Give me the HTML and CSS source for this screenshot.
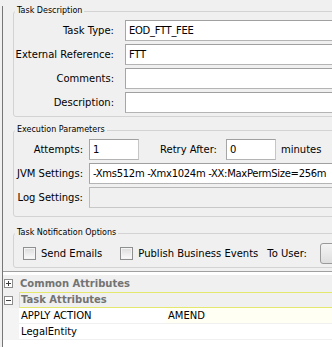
FILE: index.html
```html
<!DOCTYPE html>
<html lang="en">
<head>
    <meta charset="UTF-8">
    <meta name="viewport" content="width=device-width, initial-scale=1.0">
    <title>Task Editor</title>
    <link rel="stylesheet" href="styles.css">
</head>
<body>
    <div class="frame">

        <!-- Task Description -->
        <fieldset class="group desc">
            <legend>Task Description</legend>
            <div class="form">
                <label>Task Type:</label><div class="text">EOD_FTT_FEE</div>
                <label>External Reference:</label><div class="text">FTT</div>
                <label>Comments:</label><div class="text"></div>
                <label>Description:</label><div class="text"></div>
            </div>
        </fieldset>

        <!-- Execution Parameters -->
        <fieldset class="group exec">
            <legend>Execution Parameters</legend>
            <div class="form">
                <label>Attempts:</label>
                <div class="inline">
                    <div class="text short">1</div>
                    <span class="retry">Retry After:</span>
                    <div class="text short gap">0</div>
                    <span class="unit">minutes</span>
                </div>
                <label>JVM Settings:</label><div class="text">-Xms512m -Xmx1024m -XX:MaxPermSize=256m</div>
                <label>Log Settings:</label><div class="text disabled"></div>
            </div>
        </fieldset>

        <!-- Task Notification Options -->
        <fieldset class="group notify">
            <legend>Task Notification Options</legend>
            <div class="checks">
                <label class="check"><input type="checkbox">Send Emails</label>
                <label class="check publish"><input type="checkbox">Publish Business Events</label>
                <span class="to-user">To User:</span>
                <button class="pick"></button>
            </div>
        </fieldset>

        <!-- Property sheet -->
        <div class="props">
            <div class="cat">
                <svg class="toggle" width="9" height="9" viewBox="0 0 9 9">
                    <rect x="0.5" y="0.5" width="8" height="8" fill="#fff" stroke="#8c8c8c"/>
                    <path d="M2 4.5h5M4.5 2v5" stroke="#404040"/>
                </svg>
                <div class="cat-name">Common Attributes</div>
            </div>
            <div class="cat active">
                <svg class="toggle" width="9" height="9" viewBox="0 0 9 9">
                    <rect x="0.5" y="0.5" width="8" height="8" fill="#fff" stroke="#8c8c8c"/>
                    <path d="M2 4.5h5" stroke="#404040"/>
                </svg>
                <div class="cat-name">Task Attributes</div>
            </div>
            <div class="row">
                <div class="gutter"></div>
                <div class="cell">APPLY ACTION</div>
                <div class="cell value selected">AMEND</div>
            </div>
            <div class="row">
                <div class="gutter"></div>
                <div class="cell">LegalEntity</div>
                <div class="cell value"></div>
            </div>
        </div>
    </div>
</body>
</html>
```

FILE: styles.css
```css
html, body {
    margin: 0;
    overflow: hidden;
}
body {
    background: #f0f0f0;
    font-family: "DejaVu Sans", sans-serif;
    font-size: 10px;
    color: #000;
    width: 332px;
    height: 347px;
}
.frame {
    margin-left: 2px;
    border-left: 1px solid #767676;
    height: 347px;
    width: 460px;
}
.group {
    margin: 6px 0 0 10px;
    padding: 0 0 3px 0;
    border: 1px solid #d3d3d3;
    border-radius: 3px;
    width: 430px;
    min-width: 0;
}
.group legend {
    font-size: 8px;
    line-height: 10px;
    margin-left: 1px;
    padding: 0 2px;
}
.form {
    display: grid;
    grid-template-columns: 100px 1fr;
    column-gap: 11px;
    row-gap: 3px;
    align-items: center;
    padding-top: 4px;
}
.form label {
    text-align: right;
    white-space: nowrap;
}
.text {
    height: 21px;
    box-sizing: border-box;
    padding: 0 3px;
    border: 1px solid;
    border-color: #a0a0a0 #c6c6c6 #b4b4b4 #a6a6a6;
    background: #fff;
    line-height: 19px;
    letter-spacing: -0.3px;
    white-space: nowrap;
    overflow: hidden;
}
.text.disabled {
    background: #f0f0f0;
    border-color: #b8b8b8 #d4d4d4 #c8c8c8 #bcbcbc;
}

/* execution parameters */
.exec {
    margin-top: 8px;
    padding-bottom: 8px;
}
.exec .form {
    grid-template-columns: 69px 1fr;
    column-gap: 6px;
}
.inline {
    display: flex;
    align-items: center;
}
.short {
    width: 50px;
}
.retry {
    margin-left: 21px;
}
.short.gap {
    margin-left: 9px;
}
.unit {
    margin-left: 5px;
}

/* notification options */
.notify {
    margin-top: 11px;
}
.checks {
    display: flex;
    align-items: center;
    padding: 5px 0 0 9px;
    height: 21px;
}
.check {
    display: flex;
    align-items: center;
}
.check input {
    appearance: none;
    width: 13px;
    height: 13px;
    margin: 0 5px 0 0;
    border: 1px solid #8e8f8f;
    background: linear-gradient(#dcdcdc, #fbfbfb);
    box-shadow: inset 0 0 0 1px #f4f4f4;
}
.publish {
    margin-left: 18px;
}
.to-user {
    margin-left: 9px;
}
.pick {
    margin-left: 13px;
    width: 60px;
    height: 21px;
    border: 1px solid #9a9a9a;
    border-radius: 3px;
    background: linear-gradient(#f4f4f4, #dedede);
}

/* property sheet */
.props {
    margin-top: 3px;
    border-top: 1px solid #a0a0a0;
    padding-top: 3px;
    background: #fff;
    height: 80px;
}
.cat {
    display: flex;
    align-items: stretch;
    height: 17px;
    background: #f0f0f0;
    font-weight: bold;
    color: #737373;
}
.toggle {
    align-self: center;
    margin: 0 6px 0 1px;
    flex: none;
}
.cat-name {
    flex: 1;
    padding-left: 1px;
    line-height: 17px;
}
.cat.active {
    height: 16px;
}
.cat.active .cat-name {
    border: 1px solid #e4e86c;
    border-right: none;
    line-height: 14px;
}
.row {
    display: grid;
    grid-template-columns: 16px 147px 1fr;
    height: 16px;
}
.gutter {
    background: #f4f4f4;
}
.cell {
    padding-left: 2px;
    line-height: 15px;
    border-bottom: 1px solid #f0f0f0;
    white-space: nowrap;
}
.value.selected {
    background: #fffff4;
}
```
